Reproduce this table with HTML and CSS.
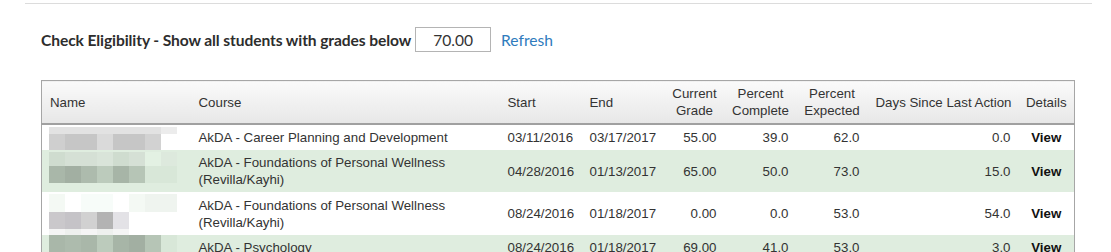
FILE: index.html
```html
<!DOCTYPE html>
<html>
<head>
<meta charset="utf-8">
<link rel="stylesheet" href="styles.css">
</head>
<body>
<div class="rule"></div>
<div class="page">
  <div class="filter">
    <span class="filter-label">Check Eligibility - Show all students with grades below</span>
    <span class="grade-input">70.00</span>
    <a class="refresh">Refresh</a>
  </div>
  <table class="grid">
    <colgroup>
      <col class="w-name"><col class="w-course"><col class="w-start"><col class="w-end"><col class="w-grade"><col class="w-comp"><col class="w-exp"><col class="w-days"><col class="w-det">
    </colgroup>
    <thead>
      <tr>
        <th class="left">Name</th>
        <th class="left">Course</th>
        <th class="left">Start</th>
        <th class="left">End</th>
        <th class="center">Current<br>Grade</th>
        <th class="center">Percent<br>Complete</th>
        <th class="center">Percent<br>Expected</th>
        <th class="left">Days Since Last Action</th>
        <th class="center">Details</th>
      </tr>
    </thead>
    <tbody>
      <tr>
        <td class="name">
          <div class="mosaic">
            <div class="m-row h7"><i class="g1"></i><i class="g1"></i><i class="g1"></i><i class="g1"></i><i class="g1"></i><i class="g1"></i><i class="g1"></i><i class="g2"></i></div>
            <div class="m-row h16"><i class="g3"></i><i class="g4"></i><i class="g4"></i><i class="g5"></i><i class="g4"></i><i class="g4"></i><i class="g6"></i><i class="w"></i></div>
          </div>
        </td>
        <td>AkDA - Career Planning and Development</td>
        <td>03/11/2016</td>
        <td>03/17/2017</td>
        <td class="num">55.00</td>
        <td class="num">39.0</td>
        <td class="num">62.0</td>
        <td class="num">0.0</td>
        <td class="view">View</td>
      </tr>
      <tr class="alt">
        <td class="name">
          <div class="mosaic">
            <div class="m-row h14"><i class="p1"></i><i class="p2"></i><i class="p2"></i><i class="p3"></i><i class="p1"></i><i class="p2"></i><i class="p4"></i><i class="p5"></i></div>
            <div class="m-row h17"><i class="d1"></i><i class="d2"></i><i class="d3"></i><i class="d4"></i><i class="d5"></i><i class="d6"></i><i class="p6"></i><i class="p6"></i></div>
          </div>
        </td>
        <td>AkDA - Foundations of Personal Wellness<br>(Revilla/Kayhi)</td>
        <td>04/28/2016</td>
        <td>01/13/2017</td>
        <td class="num">65.00</td>
        <td class="num">50.0</td>
        <td class="num">73.0</td>
        <td class="num">15.0</td>
        <td class="view">View</td>
      </tr>
      <tr>
        <td class="name pad2">
          <div class="mosaic">
            <div class="m-row h18"><i class="l1"></i><i class="w"></i><i class="l2"></i><i class="l2"></i><i class="w"></i><i class="l1"></i><i class="l3"></i><i class="l3"></i></div>
            <div class="m-row h17"><i class="k1"></i><i class="k2"></i><i class="k3"></i><i class="k4"></i><i class="k5"></i><i class="w"></i><i class="w"></i><i class="w"></i></div>
            <div class="m-row h6"><i class="l4"></i><i class="l5"></i><i class="l4"></i><i class="l5"></i><i class="l4"></i><i class="w"></i><i class="w"></i><i class="w"></i></div>
          </div>
        </td>
        <td>AkDA - Foundations of Personal Wellness<br>(Revilla/Kayhi)</td>
        <td>08/24/2016</td>
        <td>01/18/2017</td>
        <td class="num">0.00</td>
        <td class="num">0.0</td>
        <td class="num">53.0</td>
        <td class="num">54.0</td>
        <td class="view">View</td>
      </tr>
      <tr class="alt">
        <td class="name pad0">
          <div class="mosaic">
            <div class="m-row h17"><i class="d1"></i><i class="d3"></i><i class="d1"></i><i class="d4"></i><i class="d5"></i><i class="d2"></i><i class="d6"></i><i class="p6"></i></div>
          </div>
        </td>
        <td>AkDA - Psychology</td>
        <td>08/24/2016</td>
        <td>01/18/2017</td>
        <td class="num">69.00</td>
        <td class="num">41.0</td>
        <td class="num">53.0</td>
        <td class="num">3.0</td>
        <td class="view">View</td>
      </tr>
    </tbody>
  </table>
</div>
</body>
</html>
```

FILE: styles.css
```css
html, body {
  margin: 0;
  padding: 0;
  background: #fff;
}

.rule {
  margin: 3px 0 0 25px;
  width: 1067px;
  height: 0;
  border-top: 1px solid #dcdcdc;
}

.page {
  padding: 23px 0 0 41px;
}

.filter {
  display: flex;
  align-items: center;
  height: 25px;
  font-family: Lato, "Liberation Sans", sans-serif;
}

.filter-label {
  font-weight: 700;
  font-size: 15.6px;
  color: #2d2d2d;
  letter-spacing: -0.1px;
}

.grade-input {
  box-sizing: border-box;
  margin-left: 4px;
  width: 76px;
  height: 25px;
  border: 1px solid #b4b4b4;
  text-align: center;
  font-size: 15.6px;
  line-height: 24px;
  color: #333;
  font-family: Lato, "Liberation Sans", sans-serif;
}

.refresh {
  margin-left: 10px;
  font-size: 15.6px;
  color: #2f7bbd;
}

.grid {
  margin-top: 28px;
  border-collapse: collapse;
  table-layout: fixed;
  width: 1034px;
  border: 1px solid #a6a6a6;
  font-family: "Liberation Sans", Arial, sans-serif;
  font-size: 13.3px;
  line-height: 17px;
  color: #333;
}

.w-name { width: 149px; }
.w-course { width: 309px; }
.w-start { width: 82px; }
.w-end { width: 83px; }
.w-grade { width: 60px; }
.w-comp { width: 72px; }
.w-exp { width: 71px; }
.w-days { width: 151px; }
.w-det { width: 56px; }

.grid th {
  font-weight: 400;
  padding: 4px 6px 4px 8px;
  height: 34px;
  background: linear-gradient(#fafafa, #e7e7e7);
  border-bottom: 2px solid #a0a0a0;
  vertical-align: middle;
  white-space: nowrap;
}

.grid th.left { text-align: left; }
.grid th.center { text-align: center; padding: 4px 2px; }

.grid td {
  padding: 4px 8px;
  vertical-align: middle;
  white-space: nowrap;
}

.grid tr.alt td {
  background: #dfeddf;
}

.grid td.num {
  text-align: right;
}

.grid td.view {
  text-align: center;
  font-weight: 700;
  color: #111;
  padding: 4px 2px;
}

.grid td.name {
  padding: 2px 0 0 7px;
  vertical-align: top;
}

.grid td.name.pad2 { padding-top: 2px; }
.grid td.name.pad0 { padding-top: 0; }

.mosaic {
  display: flex;
  flex-direction: column;
}

.m-row {
  display: flex;
}

.m-row i {
  display: block;
  width: 16px;
  height: 100%;
}

.h6 { height: 6px; }
.h7 { height: 7px; }
.h14 { height: 14px; }
.h16 { height: 16px; }
.h17 { height: 17px; }
.h18 { height: 18px; }

.w { background: #fff; }
.g1 { background: #e2e2e2; }
.g2 { background: #ececec; }
.g3 { background: #cfcfcf; }
.g4 { background: #c6c6c6; }
.g5 { background: #dadada; }
.g6 { background: #d2d2d2; }

.p1 { background: #cfdccf; }
.p2 { background: #d5e0d5; }
.p3 { background: #d9e4d9; }
.p4 { background: #e3f1e3; }
.p5 { background: #dde9dd; }
.p6 { background: #d8e7d8; }

.d1 { background: #a9b7a9; }
.d2 { background: #a2afa2; }
.d3 { background: #adbbad; }
.d4 { background: #bccbbc; }
.d5 { background: #a7b5a7; }
.d6 { background: #b6c5b6; }

.l1 { background: #f4f9f4; }
.l2 { background: #f7fcf9; }
.l3 { background: #eff4ef; }
.l4 { background: #f5f5f5; }
.l5 { background: #eef0ee; }

.k1 { background: #cac8cb; }
.k2 { background: #c5c3c7; }
.k3 { background: #d1d1d1; }
.k4 { background: #b3b3b3; }
.k5 { background: #e3e2e6; }
```
